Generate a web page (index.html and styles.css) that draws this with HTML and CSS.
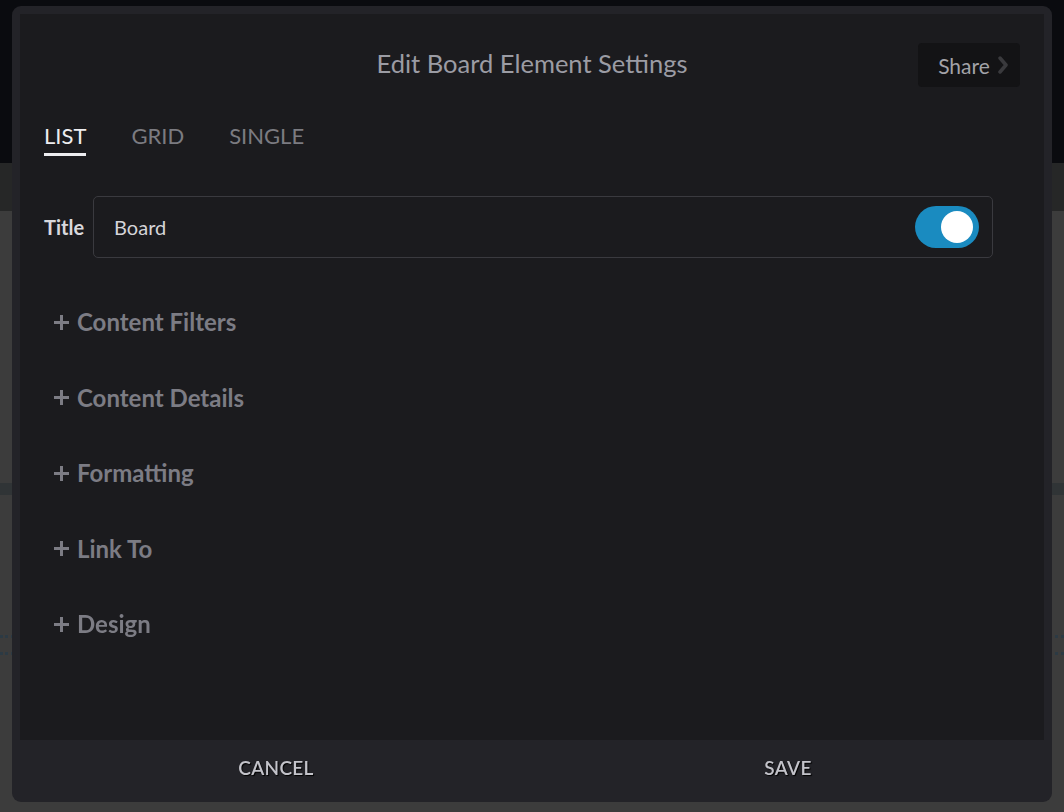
FILE: index.html
```html
<!DOCTYPE html>
<html>
<head>
    <title>Edit Board Element Settings</title>
    <link rel="stylesheet" href="styles.css">
</head>
<body>
    <div class="page">
        <div class="page-header"></div>
        <div class="page-toolbar"></div>
        <div class="page-content">
            <div class="page-block"></div>
            <div class="page-divider"></div>
            <div class="page-block short"></div>
            <div class="page-dots"></div>
        </div>
    </div>

    <div class="modal">
        <div class="modal-body">
            <div class="modal-header">
                <h1>Edit Board Element Settings</h1>
                <button class="share-btn">Share
                    <svg class="chev" width="10" height="18" viewBox="0 0 10 18"><polyline points="2,2 8,9 2,16" fill="none" stroke="#3a3a3d" stroke-width="3.5" stroke-linejoin="round" stroke-linecap="round"/></svg>
                </button>
            </div>

            <div class="tabs">
                <div class="tab active">LIST</div>
                <div class="tab">GRID</div>
                <div class="tab">SINGLE</div>
            </div>

            <div class="title-row">
                <label>Title</label>
                <div class="title-input">
                    <span>Board</span>
                    <div class="toggle"><div class="knob"></div></div>
                </div>
            </div>

            <div class="sections">
                <div class="section"><svg class="plus" width="17" height="17" viewBox="0 0 17 17"><path d="M8.5 1v15M1 8.5h15" stroke="#7c7c84" stroke-width="3"/></svg>Content Filters</div>
                <div class="section"><svg class="plus" width="17" height="17" viewBox="0 0 17 17"><path d="M8.5 1v15M1 8.5h15" stroke="#7c7c84" stroke-width="3"/></svg>Content Details</div>
                <div class="section"><svg class="plus" width="17" height="17" viewBox="0 0 17 17"><path d="M8.5 1v15M1 8.5h15" stroke="#7c7c84" stroke-width="3"/></svg>Formatting</div>
                <div class="section"><svg class="plus" width="17" height="17" viewBox="0 0 17 17"><path d="M8.5 1v15M1 8.5h15" stroke="#7c7c84" stroke-width="3"/></svg>Link To</div>
                <div class="section"><svg class="plus" width="17" height="17" viewBox="0 0 17 17"><path d="M8.5 1v15M1 8.5h15" stroke="#7c7c84" stroke-width="3"/></svg>Design</div>
            </div>
        </div>
        <div class="modal-footer">
            <button class="footer-btn">CANCEL</button>
            <button class="footer-btn">SAVE</button>
        </div>
    </div>
</body>
</html>
```

FILE: styles.css
```css
body {
    margin: 0;
    font-family: Lato, "Open Sans", sans-serif;
    background: #3c3c3c;
    overflow: hidden;
}
.page-header {
    height: 163px;
    background: #0a0b0f;
}
.page-toolbar {
    height: 48px;
    background: #262727;
}
.page-content {
    background: #3c3c3c;
}
.page-block {
    height: 272px;
}
.page-block.short {
    height: 140px;
}
.page-divider {
    height: 12px;
    background: #303436;
}
.page-dots {
    height: 14px;
    border-top: 3px dotted #2c3a44;
    border-bottom: 3px dotted #2c3a44;
}
.modal {
    position: fixed;
    left: 12px;
    top: 6px;
    width: 1040px;
    height: 796px;
    background: #232328;
    border-radius: 9px;
    display: flex;
    flex-direction: column;
    box-sizing: border-box;
    padding: 8px 8px 0 8px;
}
.modal-body {
    flex: 1;
    background: #1b1b1e;
    padding: 0 24px;
}
.modal-header {
    position: relative;
    height: 100px;
    display: flex;
    align-items: center;
    justify-content: center;
}
.modal-header h1 {
    margin: 0;
    font-size: 25.5px;
    font-weight: 400;
    color: #9b9ca4;
    position: relative;
    top: -1px;
}
.share-btn {
    position: absolute;
    right: 0;
    top: 29px;
    width: 102px;
    height: 44px;
    background: #131315;
    border: none;
    border-radius: 4px;
    font-family: inherit;
    font-size: 21px;
    color: #a3a3a8;
    padding: 0 0 0 8px;
    display: flex;
    align-items: center;
    gap: 8px;
    justify-content: center;
}
.tabs {
    display: flex;
    gap: 45px;
    padding-top: 7px;
    height: 51px;
}
.tab {
    font-size: 22px;
    color: #7b7b81;
    height: 35px;
    line-height: 29px;
    box-sizing: border-box;
}
.tab.active {
    color: #ededf0;
    border-bottom: 3px solid #ededf0;
}
.title-row {
    display: flex;
    align-items: center;
    gap: 9px;
    margin-top: 24px;
}
.title-row label {
    font-size: 20px;
    font-weight: 700;
    color: #d8d8dc;
}
.title-input {
    width: 900px;
    height: 62px;
    box-sizing: border-box;
    border: 1px solid #3a3a3f;
    border-radius: 5px;
    display: flex;
    align-items: center;
    justify-content: space-between;
    padding: 0 13px 0 20px;
    font-size: 20px;
    color: #d4d4d8;
}
.toggle {
    width: 64px;
    height: 42px;
    border-radius: 21px;
    background: #1a8bc0;
    display: flex;
    align-items: center;
    justify-content: flex-end;
    padding-right: 6px;
    box-sizing: border-box;
}
.knob {
    width: 32px;
    height: 32px;
    border-radius: 50%;
    background: #fff;
}
.sections {
    padding: 49px 0 0 9px;
    display: flex;
    flex-direction: column;
    gap: 45.5px;
}
.section {
    font-size: 24px;
    font-weight: 700;
    color: #7c7c84;
    height: 30px;
    line-height: 30px;
    display: flex;
    align-items: center;
}
.plus {
    margin-right: 7px;
}
.modal-footer {
    height: 62px;
    display: flex;
    padding-bottom: 7px;
    box-sizing: border-box;
}
.footer-btn {
    flex: 1;
    background: none;
    border: none;
    font-family: inherit;
    font-size: 19px;
    font-weight: 600;
    color: #c3c3ca;
    text-shadow: 1px 1px 1px #000;
    letter-spacing: 0.3px;
}
```
